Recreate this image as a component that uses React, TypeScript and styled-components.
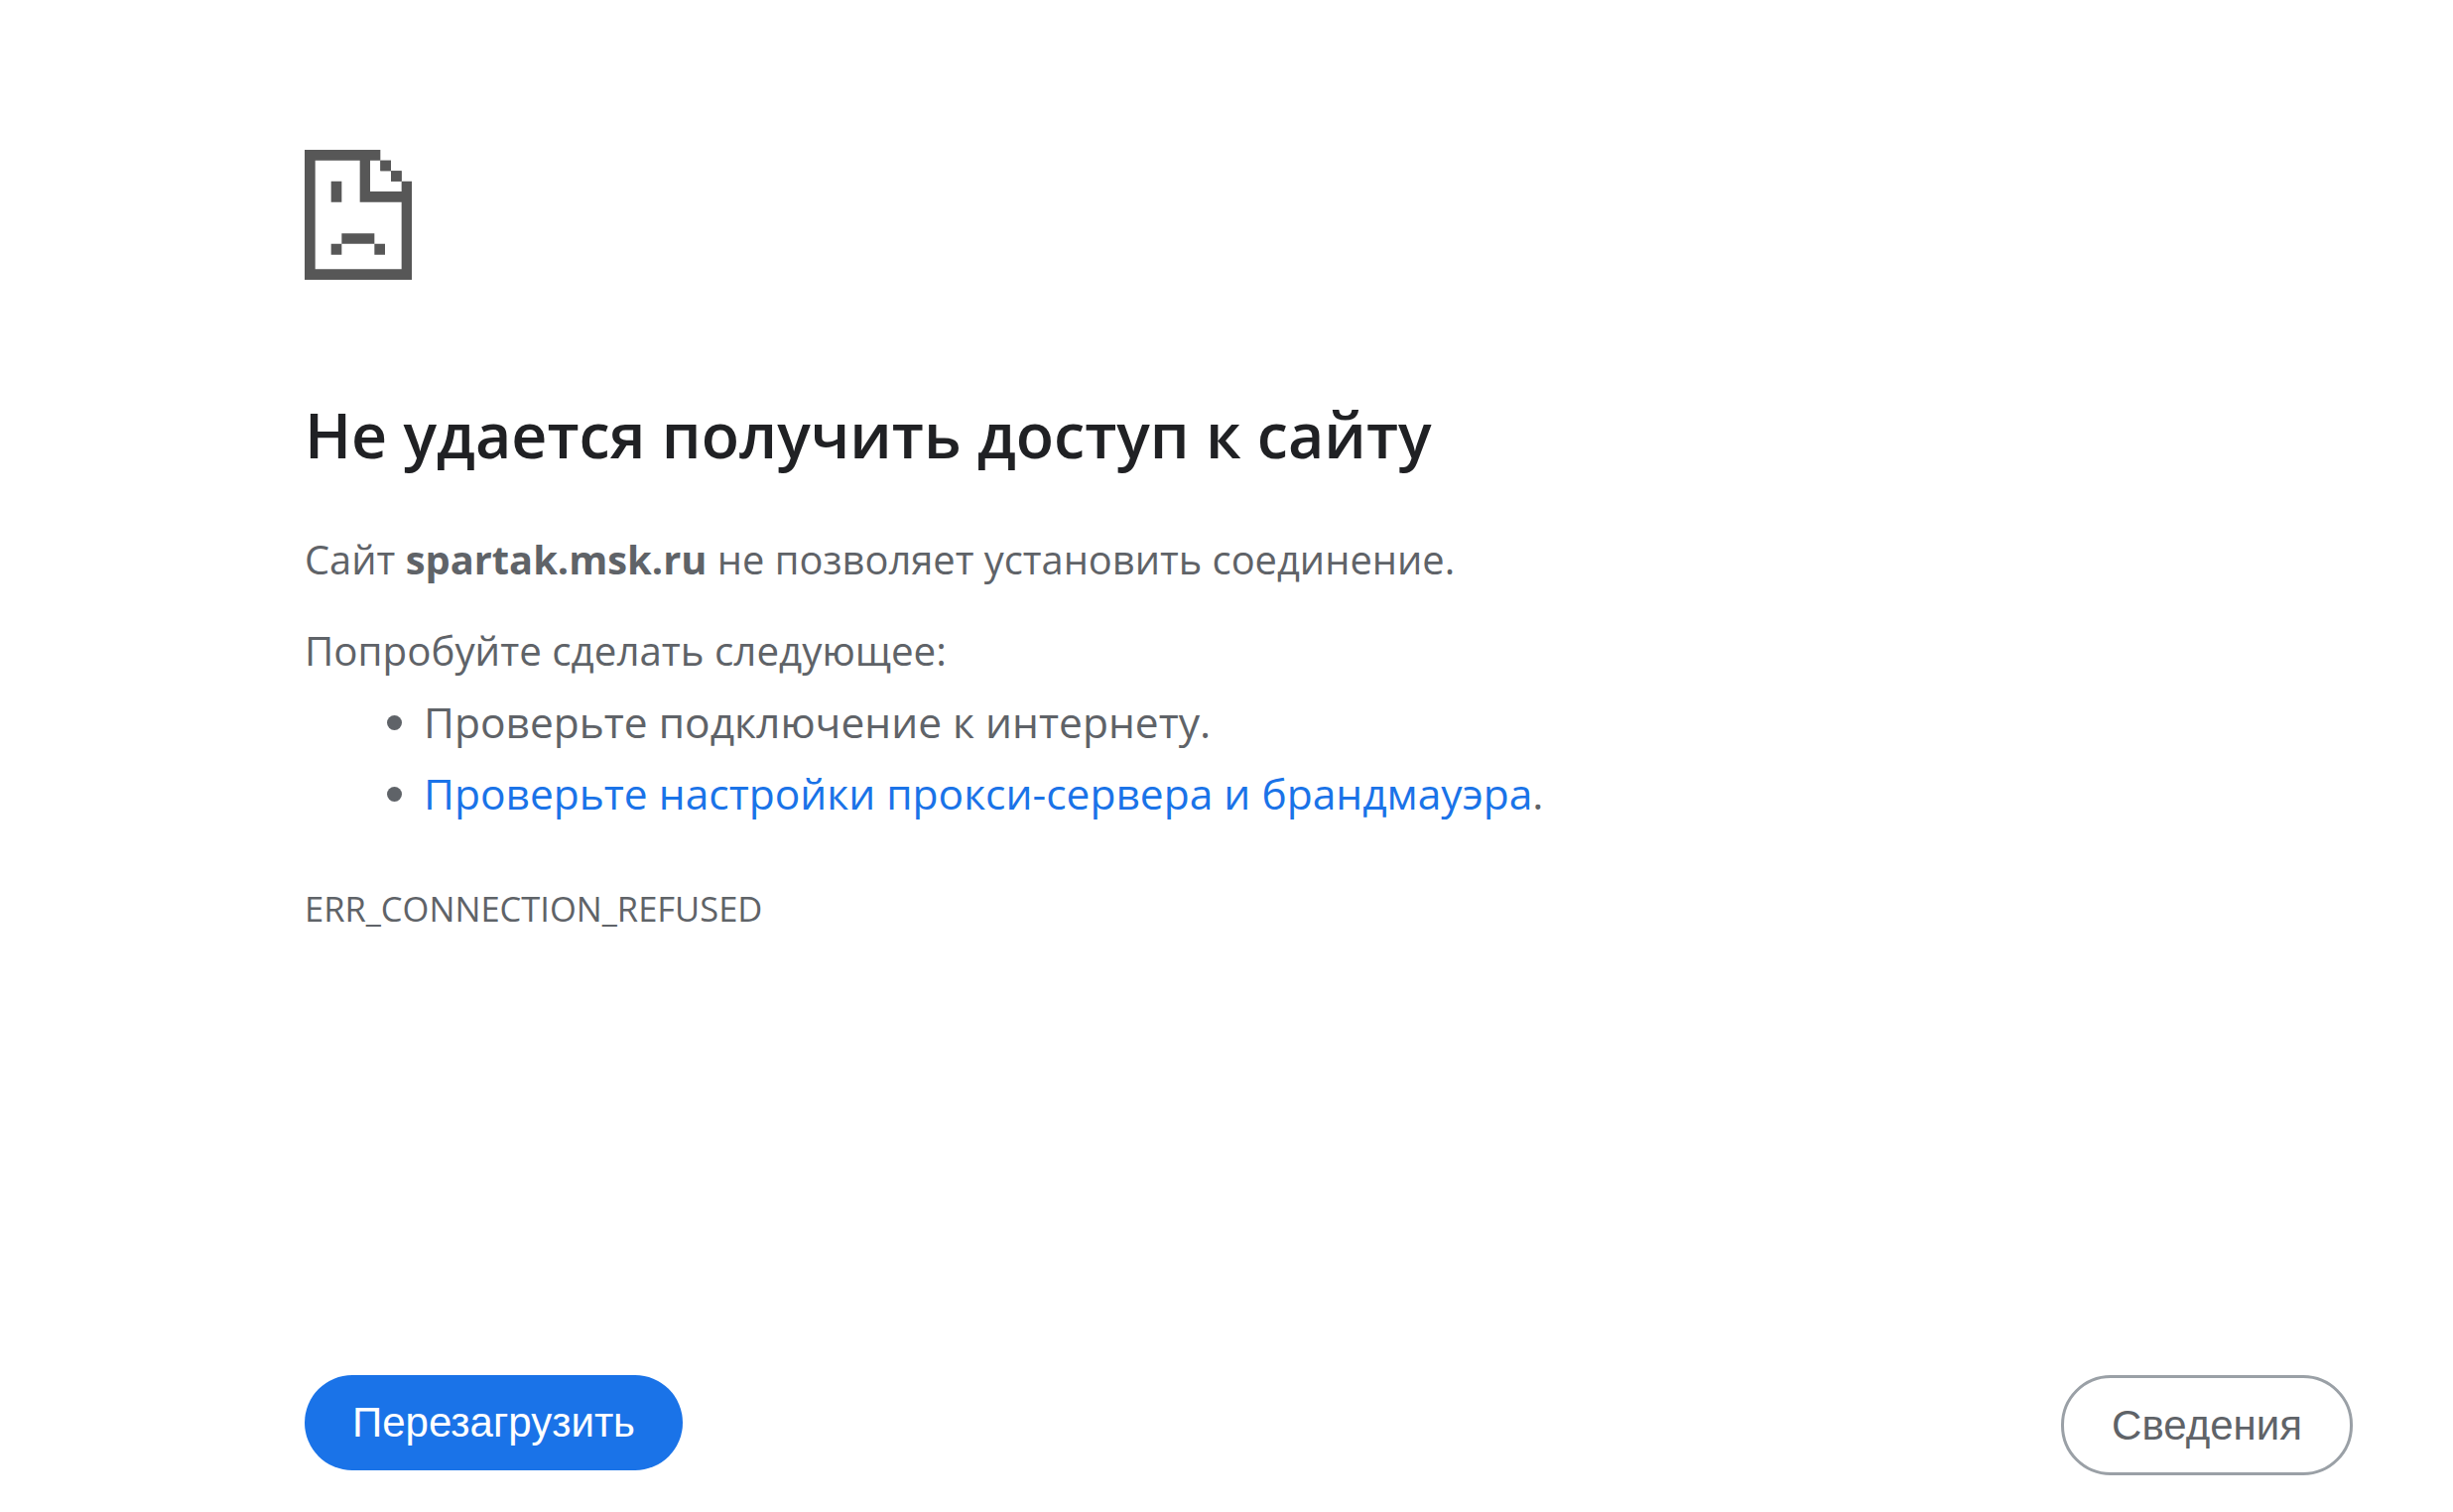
import styled, { createGlobalStyle } from "styled-components"

const GlobalStyle = createGlobalStyle`
    html, body {
        margin: 0;
        padding: 0;
        background: #fff;
    }
`

const Page = styled.div`
    height: 1524px;
    display: flex;
    flex-direction: column;
    box-sizing: border-box;
    padding: 151px 101px 37px 307px;
    font-family: "Open Sans", "Noto Sans", sans-serif;
    color: #5f6368;
    overflow: hidden;
`

const Content = styled.main`
    flex: 1;
`

const ErrorIcon = styled.svg`
    display: block;
    width: 108px;
    height: 131px;
    fill: #575757;
`

const Title = styled.h1`
    margin: 126px 0 71px;
    font-size: 62.7px;
    line-height: 60px;
    font-weight: 600;
    color: #202124;
`

const Text = styled.p`
    margin: 0 0 42px;
    font-size: 39.85px;
    line-height: 50px;
`

const Hint = styled(Text)`
    margin-bottom: 11px;
    font-size: 40.3px;
`

const Suggestions = styled.ul`
    margin: 0 0 60px;
    padding: 0 0 0 120px;
    font-size: 42.5px;
    line-height: 72px;
`

const Link = styled.a`
    color: #1a73e8;
    text-decoration: none;
`

const ErrorCode = styled.div`
    font-size: 34.5px;
    line-height: 40px;
`

const Actions = styled.div`
    display: flex;
    justify-content: space-between;
    align-items: flex-start;
`

const Button = styled.button<{ $primary?: boolean }>`
    box-sizing: border-box;
    width: ${p => (p.$primary ? "381px" : "294px")};
    height: ${p => (p.$primary ? "96px" : "101px")};
    border-radius: 50px;
    border: ${p => (p.$primary ? "none" : "3px solid #9aa0a6")};
    background: ${p => (p.$primary ? "#1a73e8" : "#fff")};
    color: ${p => (p.$primary ? "#fff" : "#5f6368")};
    font-family: "Liberation Sans", Arial, sans-serif;
    font-size: 42px;
    padding: 0;
`

export default function App() {
    return (
        <Page>
            <GlobalStyle />
            <Content>
                <ErrorIcon viewBox="0 0 324 393">
                    <path
                        fillRule="evenodd"
                        d="M0 0H229V32H261V64H293V95H324V393H0ZM32 32V361H293V158H167V32ZM198 32V126H293V95H261V64H229V32Z"
                    />
                    <path d="M229 32H261V64H229ZM261 64H293V95H261Z" />
                    <path d="M80 95H112V158H80ZM112 253H211V284H112ZM80 284H112V317H80ZM211 284H243V317H211Z" />
                </ErrorIcon>
                <Title>Не удается получить доступ к сайту</Title>
                <Text>
                    Сайт <strong>spartak.msk.ru</strong> не позволяет установить соединение.
                </Text>
                <Hint>Попробуйте сделать следующее:</Hint>
                <Suggestions>
                    <li>Проверьте подключение к интернету.</li>
                    <li>
                        <Link href="#">Проверьте настройки прокси-сервера и брандмауэра</Link>.
                    </li>
                </Suggestions>
                <ErrorCode>ERR_CONNECTION_REFUSED</ErrorCode>
            </Content>
            <Actions>
                <Button $primary>Перезагрузить</Button>
                <Button>Сведения</Button>
            </Actions>
        </Page>
    )
}
